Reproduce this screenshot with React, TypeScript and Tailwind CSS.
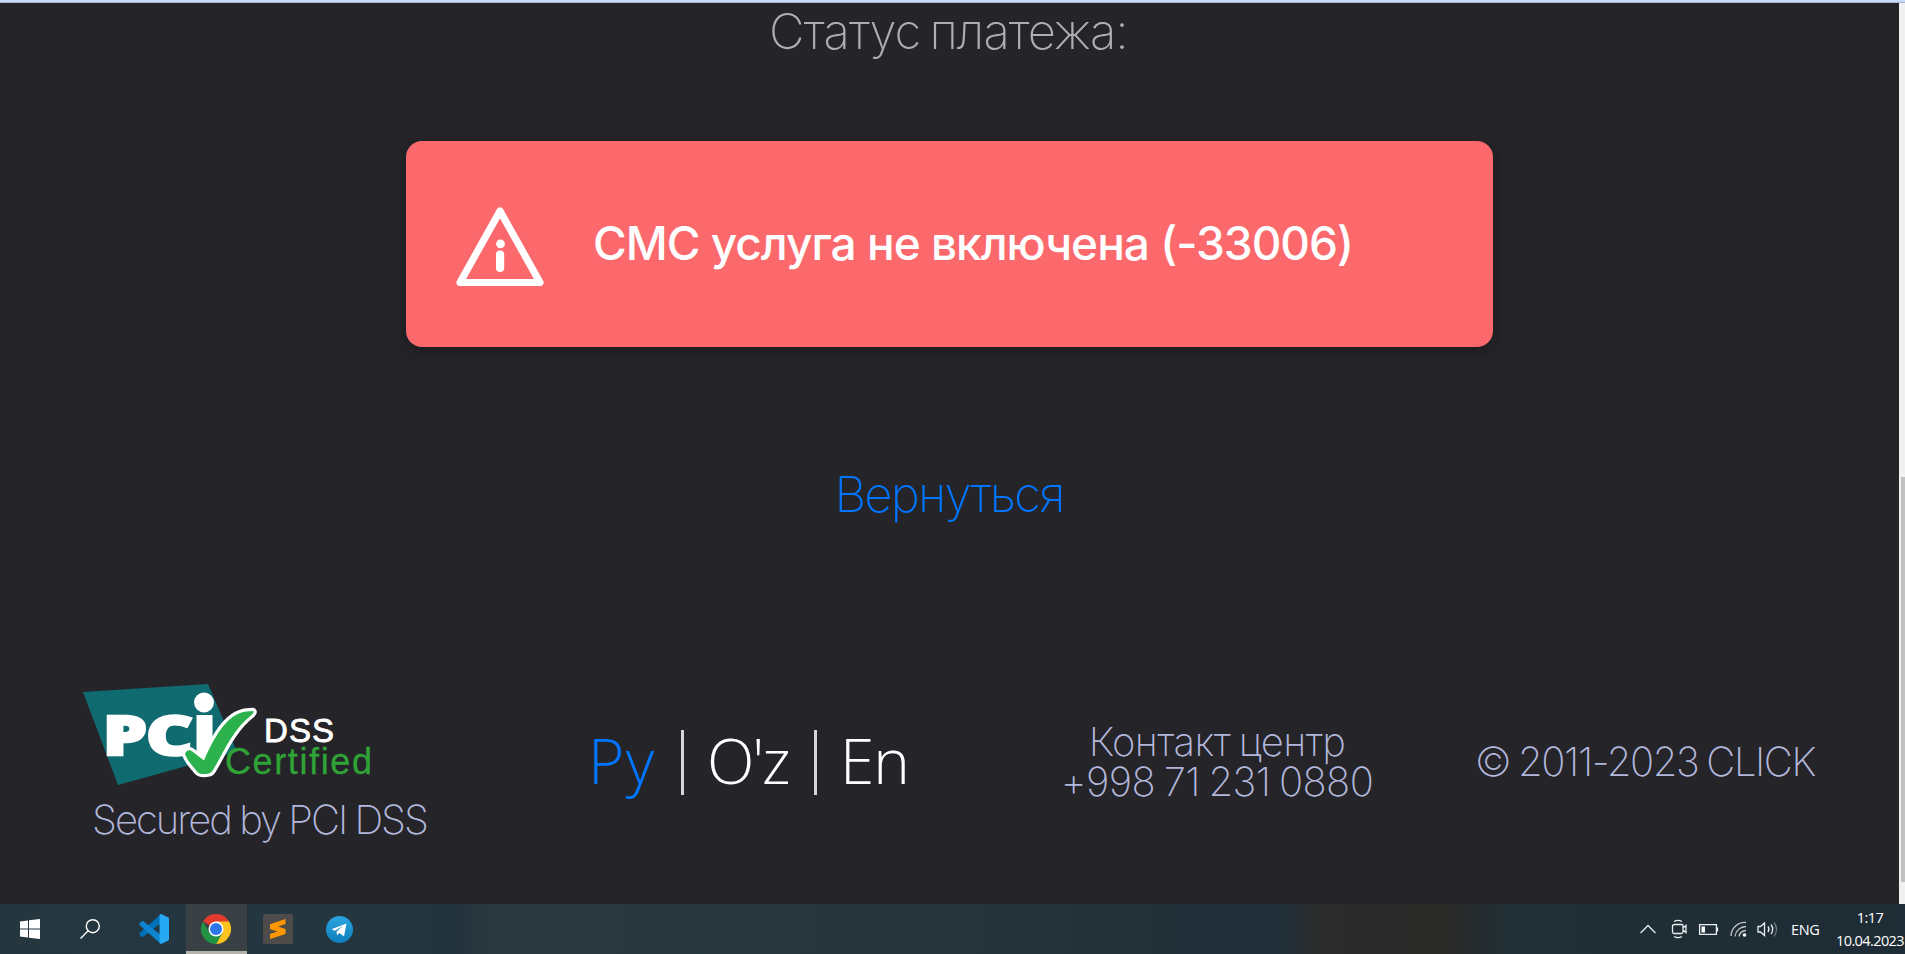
import React from "react";

const thin = "font-['Inter',sans-serif] font-extralight whitespace-nowrap";

function Alert() {
  return (
    <div className="ml-[406px] mt-[80px] flex h-[206px] w-[1087px] items-center rounded-[16px] bg-[#fc696d] pl-[50px] shadow-[0_4px_16px_rgba(0,0,0,0.3)]">
      <svg className="mt-[5px] h-[80px] w-[88px] shrink-0" viewBox="0 0 88 80" fill="none">
        <path d="M44 4 L84 75.5 H4 Z" stroke="#fff" strokeWidth="7.2" strokeLinejoin="round" />
        <circle cx="44.5" cy="36.8" r="4.4" fill="#fff" />
        <rect x="40" y="43.5" width="8.2" height="21.5" rx="4" fill="#fff" />
      </svg>
      <span className="mb-[3px] ml-[49px] whitespace-nowrap font-['Inter',sans-serif] text-[46px] font-medium leading-[60px] tracking-[-1px] text-white">
        СМС услуга не включена (-33006)
      </span>
    </div>
  );
}

function PciLogo() {
  return (
    <svg className="block h-[106px] w-[292px]" viewBox="0 0 292 106">
      <path d="M0 8 L125 0 L154 68 L35 101 Z" fill="#106b71" />
      <g fontFamily="Open Sans, sans-serif" fontWeight="800" fontSize="54" fill="#fff" stroke="#fff" strokeWidth="2.5">
        <text x="20" y="70.5" textLength="44" lengthAdjust="spacingAndGlyphs">P</text>
        <text x="63" y="70.5" textLength="47" lengthAdjust="spacingAndGlyphs">C</text>
      </g>
      <circle cx="121" cy="18.500" r="10" fill="#fff" />
      <rect x="113.500" y="31" width="16" height="50" fill="#fff" />
      <path
        d="M102 70C103 66 107 65 110 68L121 76.500C130 56 143 30 163 27.500L170 27C171 28 170.500 29 169 30.500C149 46 140 70 130 86C128 90 124 90 120 90C116 90 114 88 112 85C108 80 104 76 102 70Z"
        fill="#2bb24c" stroke="#fff" strokeWidth="6.500" strokeLinejoin="round" paintOrder="stroke"
      />
      <text x="181" y="58" fontFamily="Liberation Sans, sans-serif" fontSize="33" fill="#fff" stroke="#fff" strokeWidth=".8" textLength="70">DSS</text>
      <text x="142" y="90" fontFamily="Liberation Sans, sans-serif" fontSize="36" fill="#2fa336" stroke="#2fa336" strokeWidth=".3" textLength="147">Certified</text>
    </svg>
  );
}

function Footer() {
  return (
    <footer className="flex h-[284px] text-[40px] text-[#b3b7dc]">
      <div className="w-[508px] pl-[83px] pt-[64px]">
        <PciLogo />
        <div className={`${thin} ml-[9px] mt-[10px] leading-[40px] tracking-[-2px] [word-spacing:-1px]`}>Secured by PCI DSS</div>
      </div>
      <div className="flex w-[508px] items-start pl-[80px] pt-[110px] font-['Open_Sans',sans-serif] text-[62px] font-light leading-[61px] text-white">
        <span className="w-[93px] whitespace-nowrap tracking-[1.5px] text-[#0075ff]">Ру</span>
        <span className="h-[65px] w-[3px] bg-[#d6d6d6]" />
        <span className="w-[130px] whitespace-nowrap pl-[23px] tracking-[-2.2px]">O'z</span>
        <span className="h-[65px] w-[3px] bg-[#d6d6d6]" />
        <span className="whitespace-nowrap pl-[23px] tracking-[-1px]">En</span>
      </div>
      <div className={`${thin} w-[402px] pt-[102px] text-center leading-[40px] tracking-[-0.600px] [word-spacing:-2px]`}>
        <div>Контакт центр</div>
        <div>+998 71 231 0880</div>
      </div>
      <div className={`${thin} pl-[57px] pt-[122px] leading-[40px] tracking-[-1.400px] [word-spacing:-2px]`}>© 2011-2023 CLICK</div>
    </footer>
  );
}

function Taskbar() {
  return (
    <div className="flex h-[50px] w-full bg-[linear-gradient(90deg,#25363f_0px,#243740_200px,#24343e_460px,#2a393e_490px,#27383c_700px,#27343a_950px,#222f38_1180px,#202f38_1280px,#2a2b2b_1320px,#292927_1450px,#202f36_1510px,#1e2d35_1905px)] text-white">
      <div className="flex w-[60px] shrink-0 items-center justify-center">
        <svg className="h-[20px] w-[20px]" viewBox="0 0 20 20" fill="#fff"><path d="M0 2.600 8 1.500V9.500H0ZM9 1.300 20 0V9.500H9ZM0 10.500H8V18.500L0 17.400ZM9 10.500H20V20L9 18.700Z" /></svg>
      </div>
      <div className="flex w-[60px] shrink-0 items-center justify-center">
        <svg className="h-[20px] w-[20px]" viewBox="0 0 20 20" fill="none" stroke="#fff" strokeWidth="1.400"><circle cx="12.800" cy="7.200" r="6.500" /><path d="M8.200 11.800.5 19.500" /></svg>
      </div>
      <div className="flex w-[66px] shrink-0 items-center justify-center pl-[2px]">
        <svg className="h-[30px] w-[30px]" viewBox="0 0 30 30">
          <path d="M22 0 1 18.500c-1 .9-1 1.800-.2 2.600L2.500 22.600c.7.600 1.500.500 2.200 0L22 9Z" fill="#0070b8" />
          <path d="M22 30 1 11.500c-1-.9-1-1.800-.2-2.600L2.500 7.400c.7-.6 1.500-.5 2.200 0L22 21Z" fill="#0d85d1" />
          <path d="M22 0 29 3.200c.7.300 1 .8 1 1.500V25.300c0 .7-.3 1.200-1 1.500L22 30c-.8 0-1.500-.8-1.500-1.500V1.500C20.500.8 21 0 22 0Z" fill="#27a8f2" />
        </svg>
      </div>
      <div className="flex w-[61px] shrink-0 items-center justify-center border-b-[3px] border-[#b5b2ac] bg-[#3a4144] pr-[2px] pt-[3px]">
        <svg className="h-[30px] w-[30px]" viewBox="0 0 48 48">
          <path d="M24 24 3.200 12A24 24 0 0 1 44.800 12Z" fill="#e33b2e" />
          <path d="M24 12H44.800A24 24 0 0 1 24 48L34.400 30Z" fill="#fcc31e" />
          <path d="M3.200 12A24 24 0 0 0 24 48L34.400 30 24 34 13.600 30Z" fill="#229342" />
          <circle cx="24" cy="24" r="12" fill="#fff" /><circle cx="24" cy="24" r="9.600" fill="#2b77ea" />
        </svg>
      </div>
      <div className="flex w-[62px] shrink-0 items-center justify-center">
        <svg className="h-[30px] w-[30px]" viewBox="0 0 30 30">
          <rect width="30" height="30" rx="2" fill="#4e4c4b" />
          <path d="M7 10.200 22.500 5V10L15 12.500 22.500 15V20L7 25V20L14.500 17.500 7 15Z" fill="#ff9800" />
        </svg>
      </div>
      <div className="flex w-[62px] shrink-0 items-center justify-center pr-[2px]">
        <svg className="h-[27px] w-[27px]" viewBox="0 0 27 27">
          <defs><linearGradient id="tg" x1="0" y1="0" x2="0" y2="1"><stop stopColor="#2aa5e0" /><stop offset="1" stopColor="#0d7fbc" /></linearGradient></defs>
          <circle cx="13.500" cy="13.500" r="13.500" fill="url(#tg)" />
          <path d="M5.500 13.200 20.500 7.400 18 20.300 13.300 17 11 19.200 10.500 15.800 17 9.800 9 14.800Z" fill="#fff" />
        </svg>
      </div>
      <svg className="ml-[1268px] mt-[15px] h-[20px] w-[142px] shrink-0" viewBox="0 0 142 20" fill="none" stroke="#e8ecee" strokeWidth="1.300">
        <path d="M1.500 14 9 6.500 16.500 14" />
        <path d="M35 2.500Q39 .3 43 2.500M35 17.500Q39 19.700 43 17.500M36 5.500H43Q44 5.500 44 6.500V13Q44 14.500 42.500 14.500H35Q33.500 14.500 33.500 13V7Q33.500 5.500 36 5.500ZM44 9 47 6.500V13.500L44 11" />
        <path d="M60.600 5.600H77.400V15.400H60.600ZM78.500 8.500V12.500" /><path d="M62.500 7.500H66V13.500H62.500Z" fill="#fff" stroke="none" />
        <path d="M92 17A14 14 0 0 1 107 3.500M96 17.500A11 11 0 0 1 107 7.500M100 17.500A7.500 7.500 0 0 1 107 11.500" opacity=".8" /><circle cx="105.500" cy="16" r="1.800" fill="#fff" stroke="none" />
        <path d="M119 7.500H121.500L125.500 4V16.500L121.500 13H119ZM129 7.500Q131 10.300 129 13M132 5.500Q135.500 10.300 132 15" /><path d="M135 3.500Q140 10.300 135 17.500" opacity=".4" />
      </svg>
      <span className="ml-[10px] mt-[16px] w-[30px] shrink-0 whitespace-nowrap font-['Open_Sans',sans-serif] text-[14.500px] leading-[20px] tracking-[-0.400px]">ENG</span>
      <div className="ml-[14px] w-[70px] shrink-0 whitespace-nowrap pt-[2px] text-center font-['Open_Sans',sans-serif] text-[14.500px] leading-[23px] tracking-[-0.600px]">
        <div>1:17</div>
        <div>10.04.2023</div>
      </div>
    </div>
  );
}

export default function App() {
  return (
    <div className="flex h-[954px] w-[1905px] flex-col overflow-hidden bg-[#252429]">
      <div className="h-[3px] shrink-0 border-b border-[#a3b4d3] bg-[#c9dbf8]" />
      <div className="flex h-[901px] shrink-0">
        <main className="w-[1899px]">
          <h1 className={`${thin} pr-[2px] text-center text-[49px] leading-[58px] tracking-[-0.900px] text-[#adaeb2] [word-spacing:-4px]`}>Статус платежа:</h1>
          <Alert />
          <div className={`${thin} mt-[118px] h-[155px] pr-[1px] text-center text-[49px] leading-[59px] tracking-[-1.700px] text-[#0075ff]`}>
            <a href="#">Вернуться</a>
          </div>
          <Footer />
        </main>
        <div className="flex w-[6px] flex-col bg-[#f1f1f1] pl-[2px] pt-[474px]">
          <div className="h-[405px] bg-[#c1c1c1]" />
        </div>
      </div>
      <Taskbar />
    </div>
  );
}
